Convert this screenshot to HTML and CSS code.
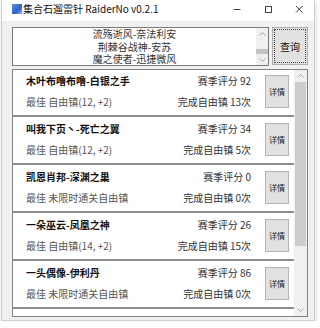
FILE: index.html
```html
<!DOCTYPE html>
<html lang="zh-CN">
<head>
    <meta charset="UTF-8">
    <title>RaiderNo</title>
    <link rel="stylesheet" href="styles.css">
</head>
<body>

    <div class="window">
        <div class="titlebar">
            <span class="app-icon"></span>
            <span class="title">集合石遛雷针 RaiderNo v0.2.1</span>
            <div class="controls">
                <span class="ctrl">
                    <svg width="10" height="10" viewBox="0 0 10 10"><path d="M1.5 5.5h7" stroke="#444" stroke-width="1" fill="none"/></svg>
                </span>
                <span class="ctrl">
                    <svg width="10" height="10" viewBox="0 0 10 10"><rect x="2.5" y="2.5" width="6" height="6" stroke="#444" stroke-width="1" fill="none"/></svg>
                </span>
                <span class="ctrl">
                    <svg width="10" height="10" viewBox="0 0 10 10"><path d="M2 2l6.5 6.5M8.5 2L2 8.5" stroke="#444" stroke-width="1" fill="none"/></svg>
                </span>
            </div>
        </div>

        <div class="client">
            <div class="search-row">
                <div class="listbox">
                    <div class="list-items">
                        <div class="list-item">冰风岗-风暴之怒</div>
                        <div class="list-item">流殇逝风-奈法利安</div>
                        <div class="list-item">荆棘谷战神-安苏</div>
                        <div class="list-item">魔之使者-迅捷微风</div>
                    </div>
                    <div class="vscroll small">
                        <span class="arrow up"><svg width="7" height="4" viewBox="0 0 7 4"><path d="M0.5 3.5l3-3 3 3" stroke="#a6a6a6" fill="none"/></svg></span>
                        <span class="track-gap"></span>
                        <span class="thumb"></span>
                        <span class="track-fill"></span>
                        <span class="arrow down"><svg width="7" height="4" viewBox="0 0 7 4"><path d="M0.5 0.5l3 3 3-3" stroke="#a6a6a6" fill="none"/></svg></span>
                    </div>
                </div>
                <button class="query-btn"><span class="focus">查询</span></button>
            </div>

            <div class="panel">
                <div class="cards">
                    <div class="card">
                        <div class="info">
                            <div class="row">
                                <span class="name">木叶布噜布噜-白银之手</span>
                                <span class="stat">赛季评分 92</span>
                            </div>
                            <div class="row">
                                <span class="best">最佳 自由镇(12, +2)</span>
                                <span class="stat">完成自由镇 13次</span>
                            </div>
                        </div>
                        <button class="detail-btn">详情</button>
                    </div>
                    <div class="card">
                        <div class="info">
                            <div class="row">
                                <span class="name">叫我下页丶-死亡之翼</span>
                                <span class="stat">赛季评分 34</span>
                            </div>
                            <div class="row">
                                <span class="best">最佳 自由镇(12, +2)</span>
                                <span class="stat">完成自由镇 5次</span>
                            </div>
                        </div>
                        <button class="detail-btn">详情</button>
                    </div>
                    <div class="card">
                        <div class="info">
                            <div class="row">
                                <span class="name">凯恩肖邦-深渊之巢</span>
                                <span class="stat">赛季评分 0</span>
                            </div>
                            <div class="row">
                                <span class="best">最佳 未限时通关自由镇</span>
                                <span class="stat">完成自由镇 0次</span>
                            </div>
                        </div>
                        <button class="detail-btn">详情</button>
                    </div>
                    <div class="card">
                        <div class="info">
                            <div class="row">
                                <span class="name">一朵巫云-凤凰之神</span>
                                <span class="stat">赛季评分 26</span>
                            </div>
                            <div class="row">
                                <span class="best">最佳 自由镇(14, +2)</span>
                                <span class="stat">完成自由镇 15次</span>
                            </div>
                        </div>
                        <button class="detail-btn">详情</button>
                    </div>
                    <div class="card">
                        <div class="info">
                            <div class="row">
                                <span class="name">一头偶像-伊利丹</span>
                                <span class="stat">赛季评分 86</span>
                            </div>
                            <div class="row">
                                <span class="best">最佳 未限时通关自由镇</span>
                                <span class="stat">完成自由镇 0次</span>
                            </div>
                        </div>
                        <button class="detail-btn">详情</button>
                    </div>
                </div>
                <div class="vscroll">
                    <span class="arrow up"><svg width="7" height="4" viewBox="0 0 7 4"><path d="M0.5 3.5l3-3 3 3" stroke="#a6a6a6" fill="none"/></svg></span>
                    <span class="thumb"></span>
                    <span class="track-fill"></span>
                    <span class="arrow down"><svg width="7" height="4" viewBox="0 0 7 4"><path d="M0.5 0.5l3 3 3-3" stroke="#a6a6a6" fill="none"/></svg></span>
                </div>
            </div>
        </div>
    </div>

</body>
</html>
```

FILE: styles.css
```css
body {
    margin: 0;
    background: #fdfdfd;
    font-family: "Noto Sans CJK SC", "Noto Sans", sans-serif;
    font-size: 10px;
    color: #222;
}
.window {
    width: 312px;
    height: 320px;
    margin-left: 1px;
    border: 1px solid #cfcfcf;
    border-top: none;
    background: #f0f0f0;
    box-shadow: 1px 2px 4px rgba(0, 0, 0, 0.12);
    display: flex;
    flex-direction: column;
}
.titlebar {
    height: 21px;
    background: white;
    display: flex;
    align-items: center;
}
.app-icon {
    width: 10px;
    height: 10px;
    margin-left: 10px;
    margin-top: -3px;
    background: linear-gradient(135deg, #5f8fe0, #2f62c8 60%, #8fb3ee);
}
.title {
    margin-left: 1px;
    margin-top: -3px;
    line-height: 12px;
    color: #111;
}
.controls {
    margin-left: auto;
    display: flex;
    height: 100%;
}
.ctrl {
    width: 31px;
    display: flex;
    align-items: center;
    justify-content: center;
    padding-bottom: 3px;
}
.client {
    flex: 1;
    padding: 6px 6px 3px 10px;
    display: flex;
    flex-direction: column;
}
.search-row {
    display: flex;
    align-items: flex-start;
    gap: 3px;
    height: 39px;
}
.listbox {
    width: 255px;
    height: 37px;
    border: 1px solid #7a7a7a;
    background: white;
    display: flex;
    overflow: hidden;
}
.list-items {
    flex: 1;
    margin-top: -12.5px;
}
.list-item {
    height: 12.5px;
    line-height: 12.5px;
    text-align: center;
    color: #333;
}
.query-btn {
    width: 36px;
    height: 38px;
    padding: 1px;
    border: 1px solid #adadad;
    background: #e1e1e1;
    font-family: inherit;
    font-size: 10px;
    color: #111;
}
.query-btn .focus {
    display: flex;
    align-items: center;
    justify-content: center;
    height: 100%;
    border: 1px dotted #444;
    box-sizing: border-box;
}
.vscroll {
    width: 13px;
    background: #f0f0f0;
    display: flex;
    flex-direction: column;
}
.vscroll.small {
    width: 12px;
}
.arrow {
    height: 12px;
    display: flex;
    align-items: center;
    justify-content: center;
}
.vscroll.small .arrow.down {
    height: 10px;
}
.track-gap {
    height: 9px;
}
.thumb {
    height: 164px;
    margin: 0 1px;
    background: #cdcdcd;
}
.vscroll.small .thumb {
    height: 5px;
    margin: 0;
    background: #c3c3c3;
}
.track-fill {
    flex: 1;
}
.panel {
    margin-top: 3px;
    height: 248px;
    box-sizing: border-box;
    border: 1px solid #828282;
    background: white;
    display: flex;
    overflow: hidden;
}
.cards {
    flex: 1;
    margin-top: -1px;
}
.card {
    height: 48px;
    box-sizing: border-box;
    padding: 5px 5px 6px 13px;
    border-bottom: 2px solid #8f8f8f;
    display: flex;
}
.info {
    flex: 1;
    display: flex;
    flex-direction: column;
    gap: 7px;
}
.row {
    display: flex;
    justify-content: space-between;
    line-height: 14px;
    height: 14px;
}
.name {
    font-weight: bold;
    color: #111;
}
.best {
    color: #555;
}
.stat {
    color: #333;
}
.detail-btn {
    width: 24px;
    height: 33px;
    margin: 1px 0 0 14px;
    padding: 0;
    border: 1px solid #b4b4b4;
    background: #e1e1e1;
    font-family: inherit;
    font-size: 8px;
    color: #222;
}
```
